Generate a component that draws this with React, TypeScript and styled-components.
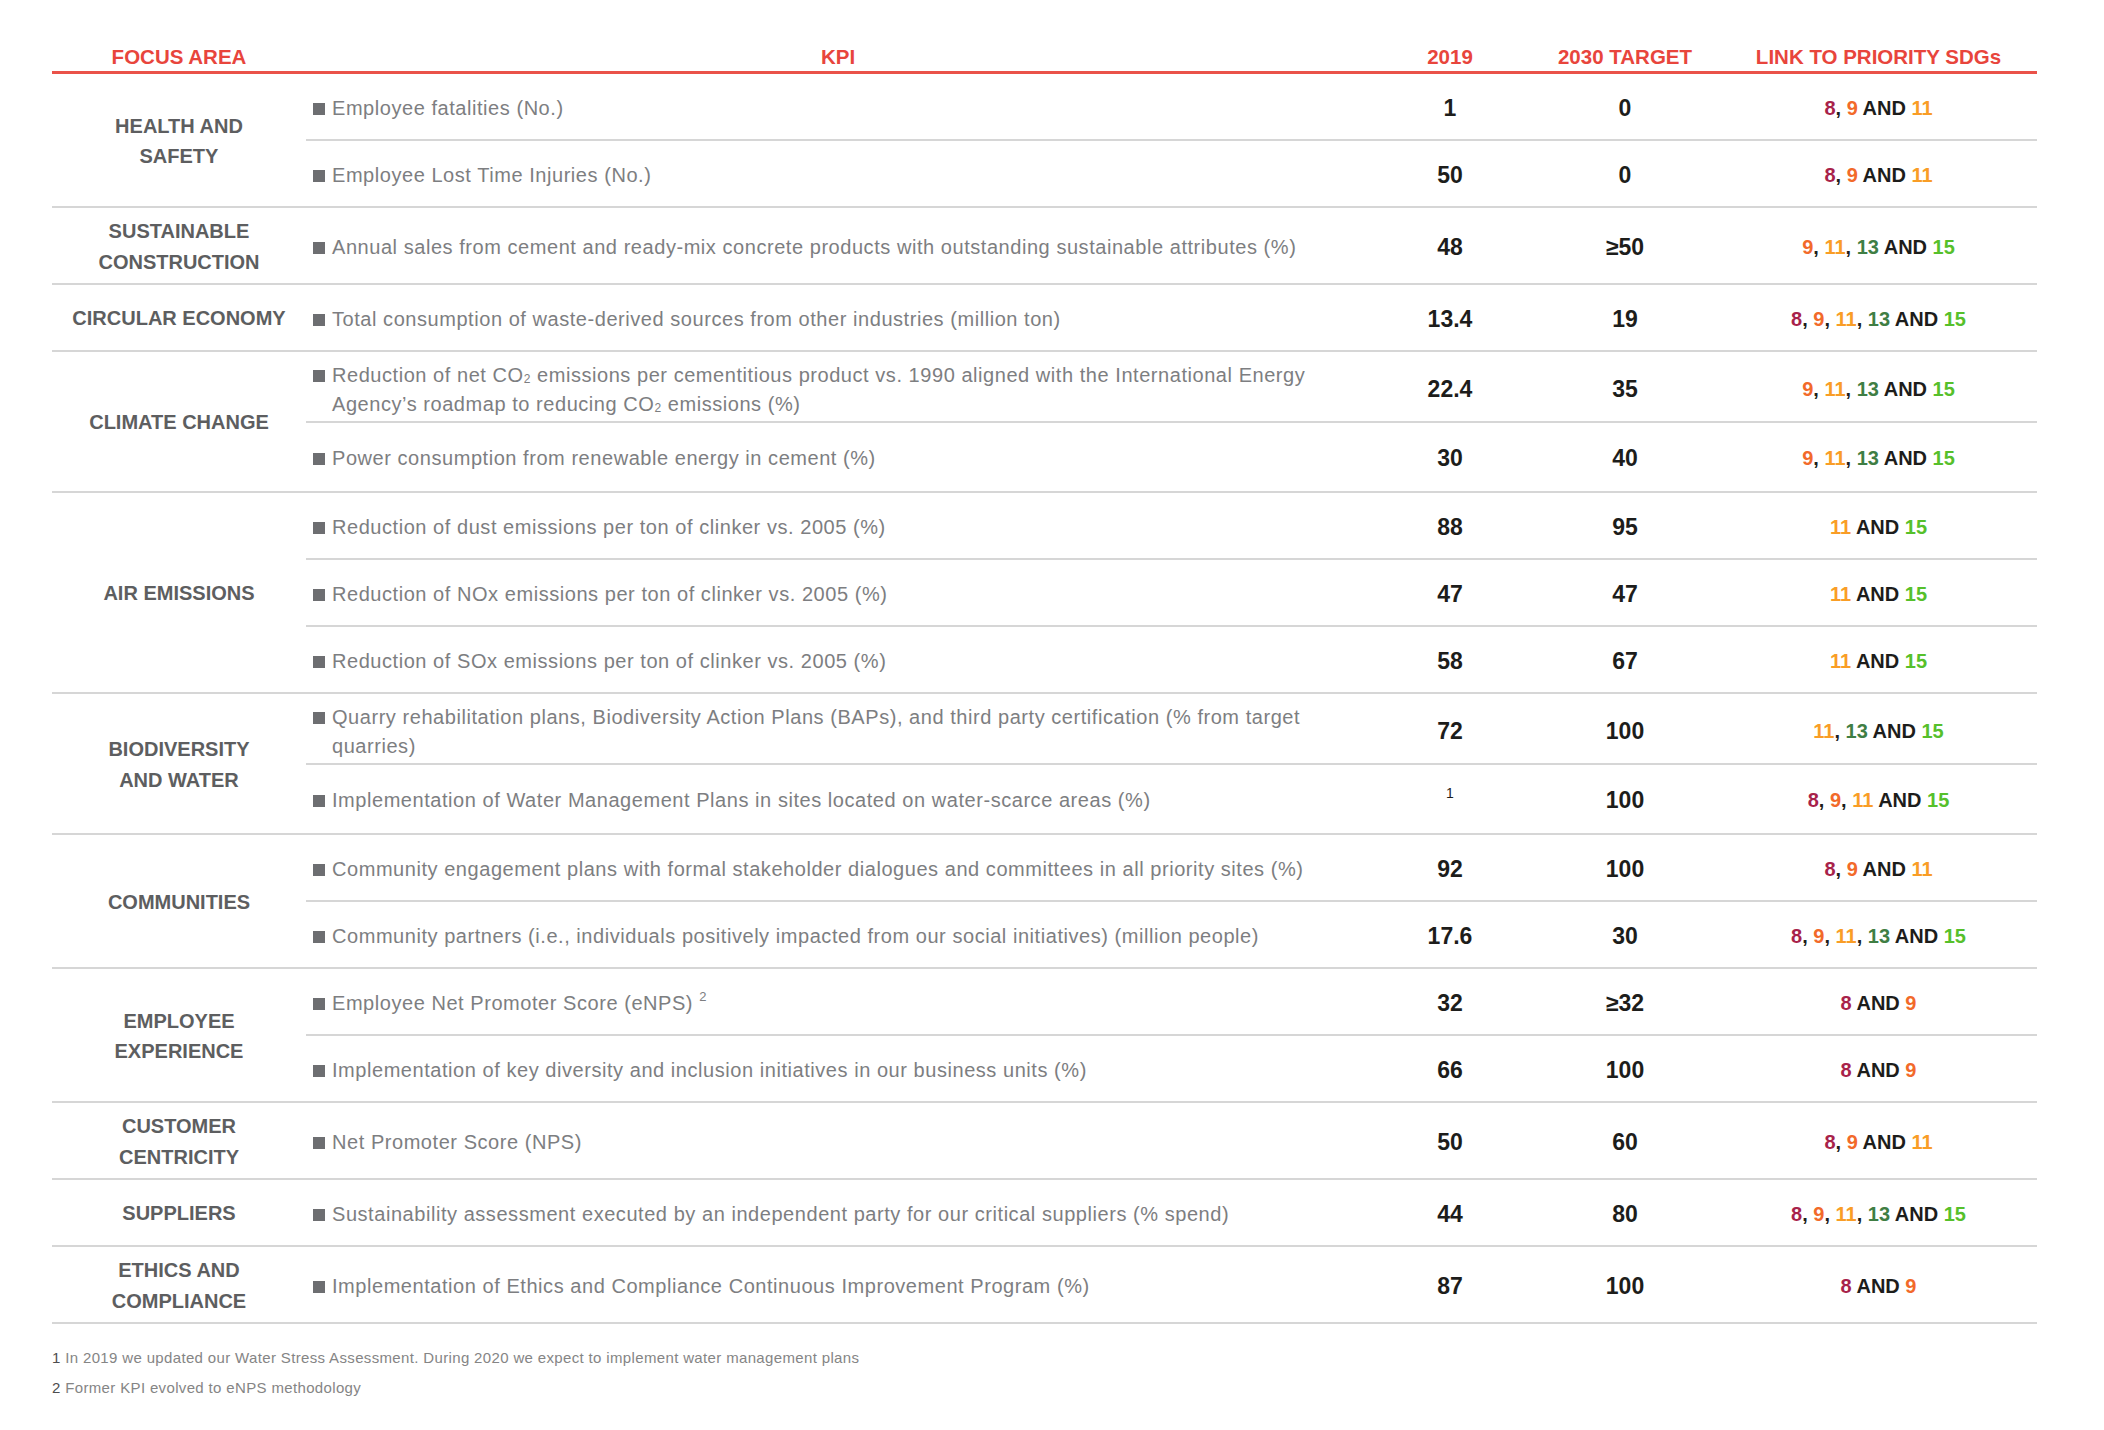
import React from 'react';
import styled, { createGlobalStyle } from 'styled-components';

const GlobalStyle = createGlobalStyle`
  html, body { margin: 0; padding: 0; background: #ffffff; }
  body { font-family: "Liberation Sans", Arial, sans-serif; }
`;

const FOCUS_W = 254;
const COLS = '1064px 160px 190px 1fr';

const SDG_COLORS: Record<number, string> = {
  8: '#a8224a',
  9: '#f26a2a',
  11: '#f99d26',
  13: '#3f7e44',
  15: '#56c02b',
};

const Page = styled.main`
  width: 2104px;
  min-height: 1430px;
  box-sizing: border-box;
  padding: 0 67px 0 52px;
`;

const Table = styled.div`
  width: 1985px;
`;

const HeaderRow = styled.div`
  display: grid;
  grid-template-columns: ${FOCUS_W}px ${COLS};
  padding: 45px 0 2px;
  border-bottom: 3px solid #ea5249;
`;

const HeaderCell = styled.div`
  font-size: 20.5px;
  line-height: 24px;
  font-weight: 700;
  color: #e8453c;
  text-align: center;
`;

const Group = styled.section`
  display: grid;
  grid-template-columns: ${FOCUS_W}px 1fr;
  border-bottom: 2px solid #d6d6d6;
`;

const Focus = styled.div`
  display: flex;
  align-items: center;
  justify-content: center;
  text-align: center;
  padding: 8px 0 6px;
  font-size: 20px;
  line-height: 30.5px;
  font-weight: 700;
  color: #5d5e60;
`;

const Rows = styled.div`
  display: flex;
  flex-direction: column;
`;

const Row = styled.div`
  flex: 1;
  display: grid;
  grid-template-columns: ${COLS};
  align-items: center;
  min-height: 65px;
  & + & {
    border-top: 2px solid #d6d6d6;
  }
`;

const Kpi = styled.div`
  display: flex;
  align-items: flex-start;
  gap: 7px;
  padding: 9px 0 5px 7px;
`;

const Bullet = styled.span`
  flex: none;
  width: 12px;
  height: 12px;
  margin-top: 9px;
  background: #6d6e71;
`;

const KpiText = styled.p`
  margin: 0;
  font-size: 20px;
  line-height: 29px;
  letter-spacing: 0.55px;
  color: #7d7e81;
`;

const Sub = styled.sub`
  font-size: 12px;
  vertical-align: -1px;
  line-height: 0;
`;

const Sup = styled.sup`
  font-size: 13px;
  vertical-align: 9px;
  line-height: 0;
`;

const Value = styled.div`
  padding-top: 3px;
  text-align: center;
  font-size: 23px;
  font-weight: 700;
  color: #1d1d1b;
`;

const SmallMark = styled.span`
  font-size: 14px;
  font-weight: 400;
  vertical-align: 10px;
  line-height: 0;
`;

const Sdg = styled.div`
  padding-top: 3px;
  text-align: center;
  font-size: 20px;
  font-weight: 700;
  color: #1d1d1b;
`;

const SdgNum = styled.span<{ $c: string }>`
  color: ${(p) => p.$c};
`;

const Notes = styled.div`
  padding-top: 19px;
  font-size: 15px;
  line-height: 30px;
  letter-spacing: 0.35px;
  color: #858585;
`;

const NoteNum = styled.span`
  color: #4d4d4f;
`;

type RowData = {
  kpi: React.ReactNode;
  y2019: React.ReactNode;
  target: string;
  sdg: number[];
};

type GroupData = {
  focus: string[];
  rows: RowData[];
};

const CO2 = (
  <>
    CO<Sub>2</Sub>
  </>
);

const groups: GroupData[] = [
  {
    focus: ['HEALTH AND', 'SAFETY'],
    rows: [
      { kpi: 'Employee fatalities (No.)', y2019: '1', target: '0', sdg: [8, 9, 11] },
      { kpi: 'Employee Lost Time Injuries (No.)', y2019: '50', target: '0', sdg: [8, 9, 11] },
    ],
  },
  {
    focus: ['SUSTAINABLE', 'CONSTRUCTION'],
    rows: [
      {
        kpi: 'Annual sales from cement and ready-mix concrete products with outstanding sustainable attributes (%)',
        y2019: '48',
        target: '≥50',
        sdg: [9, 11, 13, 15],
      },
    ],
  },
  {
    focus: ['CIRCULAR ECONOMY'],
    rows: [
      {
        kpi: 'Total consumption of waste-derived sources from other industries (million ton)',
        y2019: '13.4',
        target: '19',
        sdg: [8, 9, 11, 13, 15],
      },
    ],
  },
  {
    focus: ['CLIMATE CHANGE'],
    rows: [
      {
        kpi: (
          <>
            Reduction of net {CO2} emissions per cementitious product vs. 1990 aligned with the International Energy
            <br />
            Agency’s roadmap to reducing {CO2} emissions (%)
          </>
        ),
        y2019: '22.4',
        target: '35',
        sdg: [9, 11, 13, 15],
      },
      {
        kpi: 'Power consumption from renewable energy in cement (%)',
        y2019: '30',
        target: '40',
        sdg: [9, 11, 13, 15],
      },
    ],
  },
  {
    focus: ['AIR EMISSIONS'],
    rows: [
      { kpi: 'Reduction of dust emissions per ton of clinker vs. 2005 (%)', y2019: '88', target: '95', sdg: [11, 15] },
      { kpi: 'Reduction of NOx emissions per ton of clinker vs. 2005 (%)', y2019: '47', target: '47', sdg: [11, 15] },
      { kpi: 'Reduction of SOx emissions per ton of clinker vs. 2005 (%)', y2019: '58', target: '67', sdg: [11, 15] },
    ],
  },
  {
    focus: ['BIODIVERSITY', 'AND WATER'],
    rows: [
      {
        kpi: (
          <>
            Quarry rehabilitation plans, Biodiversity Action Plans (BAPs), and third party certification (% from target
            <br />
            quarries)
          </>
        ),
        y2019: '72',
        target: '100',
        sdg: [11, 13, 15],
      },
      {
        kpi: 'Implementation of Water Management Plans in sites located on water-scarce areas (%)',
        y2019: <SmallMark>1</SmallMark>,
        target: '100',
        sdg: [8, 9, 11, 15],
      },
    ],
  },
  {
    focus: ['COMMUNITIES'],
    rows: [
      {
        kpi: 'Community engagement plans with formal stakeholder dialogues and committees in all priority sites (%)',
        y2019: '92',
        target: '100',
        sdg: [8, 9, 11],
      },
      {
        kpi: 'Community partners (i.e., individuals positively impacted from our social initiatives) (million people)',
        y2019: '17.6',
        target: '30',
        sdg: [8, 9, 11, 13, 15],
      },
    ],
  },
  {
    focus: ['EMPLOYEE', 'EXPERIENCE'],
    rows: [
      {
        kpi: (
          <>
            Employee Net Promoter Score (eNPS) <Sup>2</Sup>
          </>
        ),
        y2019: '32',
        target: '≥32',
        sdg: [8, 9],
      },
      {
        kpi: 'Implementation of key diversity and inclusion initiatives in our business units (%)',
        y2019: '66',
        target: '100',
        sdg: [8, 9],
      },
    ],
  },
  {
    focus: ['CUSTOMER', 'CENTRICITY'],
    rows: [{ kpi: 'Net Promoter Score (NPS)', y2019: '50', target: '60', sdg: [8, 9, 11] }],
  },
  {
    focus: ['SUPPLIERS'],
    rows: [
      {
        kpi: 'Sustainability assessment executed by an independent party for our critical suppliers (% spend)',
        y2019: '44',
        target: '80',
        sdg: [8, 9, 11, 13, 15],
      },
    ],
  },
  {
    focus: ['ETHICS AND', 'COMPLIANCE'],
    rows: [
      {
        kpi: 'Implementation of Ethics and Compliance Continuous Improvement Program (%)',
        y2019: '87',
        target: '100',
        sdg: [8, 9],
      },
    ],
  },
];

function SdgList({ items }: { items: number[] }) {
  return (
    <Sdg>
      {items.map((n, i) => (
        <React.Fragment key={n}>
          {i > 0 && (i === items.length - 1 ? ' AND ' : ', ')}
          <SdgNum $c={SDG_COLORS[n]}>{n}</SdgNum>
        </React.Fragment>
      ))}
    </Sdg>
  );
}

export default function App() {
  return (
    <>
      <GlobalStyle />
      <Page>
        <Table>
          <HeaderRow>
            <HeaderCell>FOCUS AREA</HeaderCell>
            <HeaderCell>KPI</HeaderCell>
            <HeaderCell>2019</HeaderCell>
            <HeaderCell>2030 TARGET</HeaderCell>
            <HeaderCell>LINK TO PRIORITY SDGs</HeaderCell>
          </HeaderRow>
          {groups.map((g) => (
            <Group key={g.focus.join(' ')}>
              <Focus>
                <div>
                  {g.focus.map((line) => (
                    <div key={line}>{line}</div>
                  ))}
                </div>
              </Focus>
              <Rows>
                {g.rows.map((r, i) => (
                  <Row key={i}>
                    <Kpi>
                      <Bullet />
                      <KpiText>{r.kpi}</KpiText>
                    </Kpi>
                    <Value>{r.y2019}</Value>
                    <Value>{r.target}</Value>
                    <SdgList items={r.sdg} />
                  </Row>
                ))}
              </Rows>
            </Group>
          ))}
        </Table>
        <Notes>
          <div>
            <NoteNum>1</NoteNum> In 2019 we updated our Water Stress Assessment. During 2020 we expect to implement water
            management plans
          </div>
          <div>
            <NoteNum>2</NoteNum> Former KPI evolved to eNPS methodology
          </div>
        </Notes>
      </Page>
    </>
  );
}
